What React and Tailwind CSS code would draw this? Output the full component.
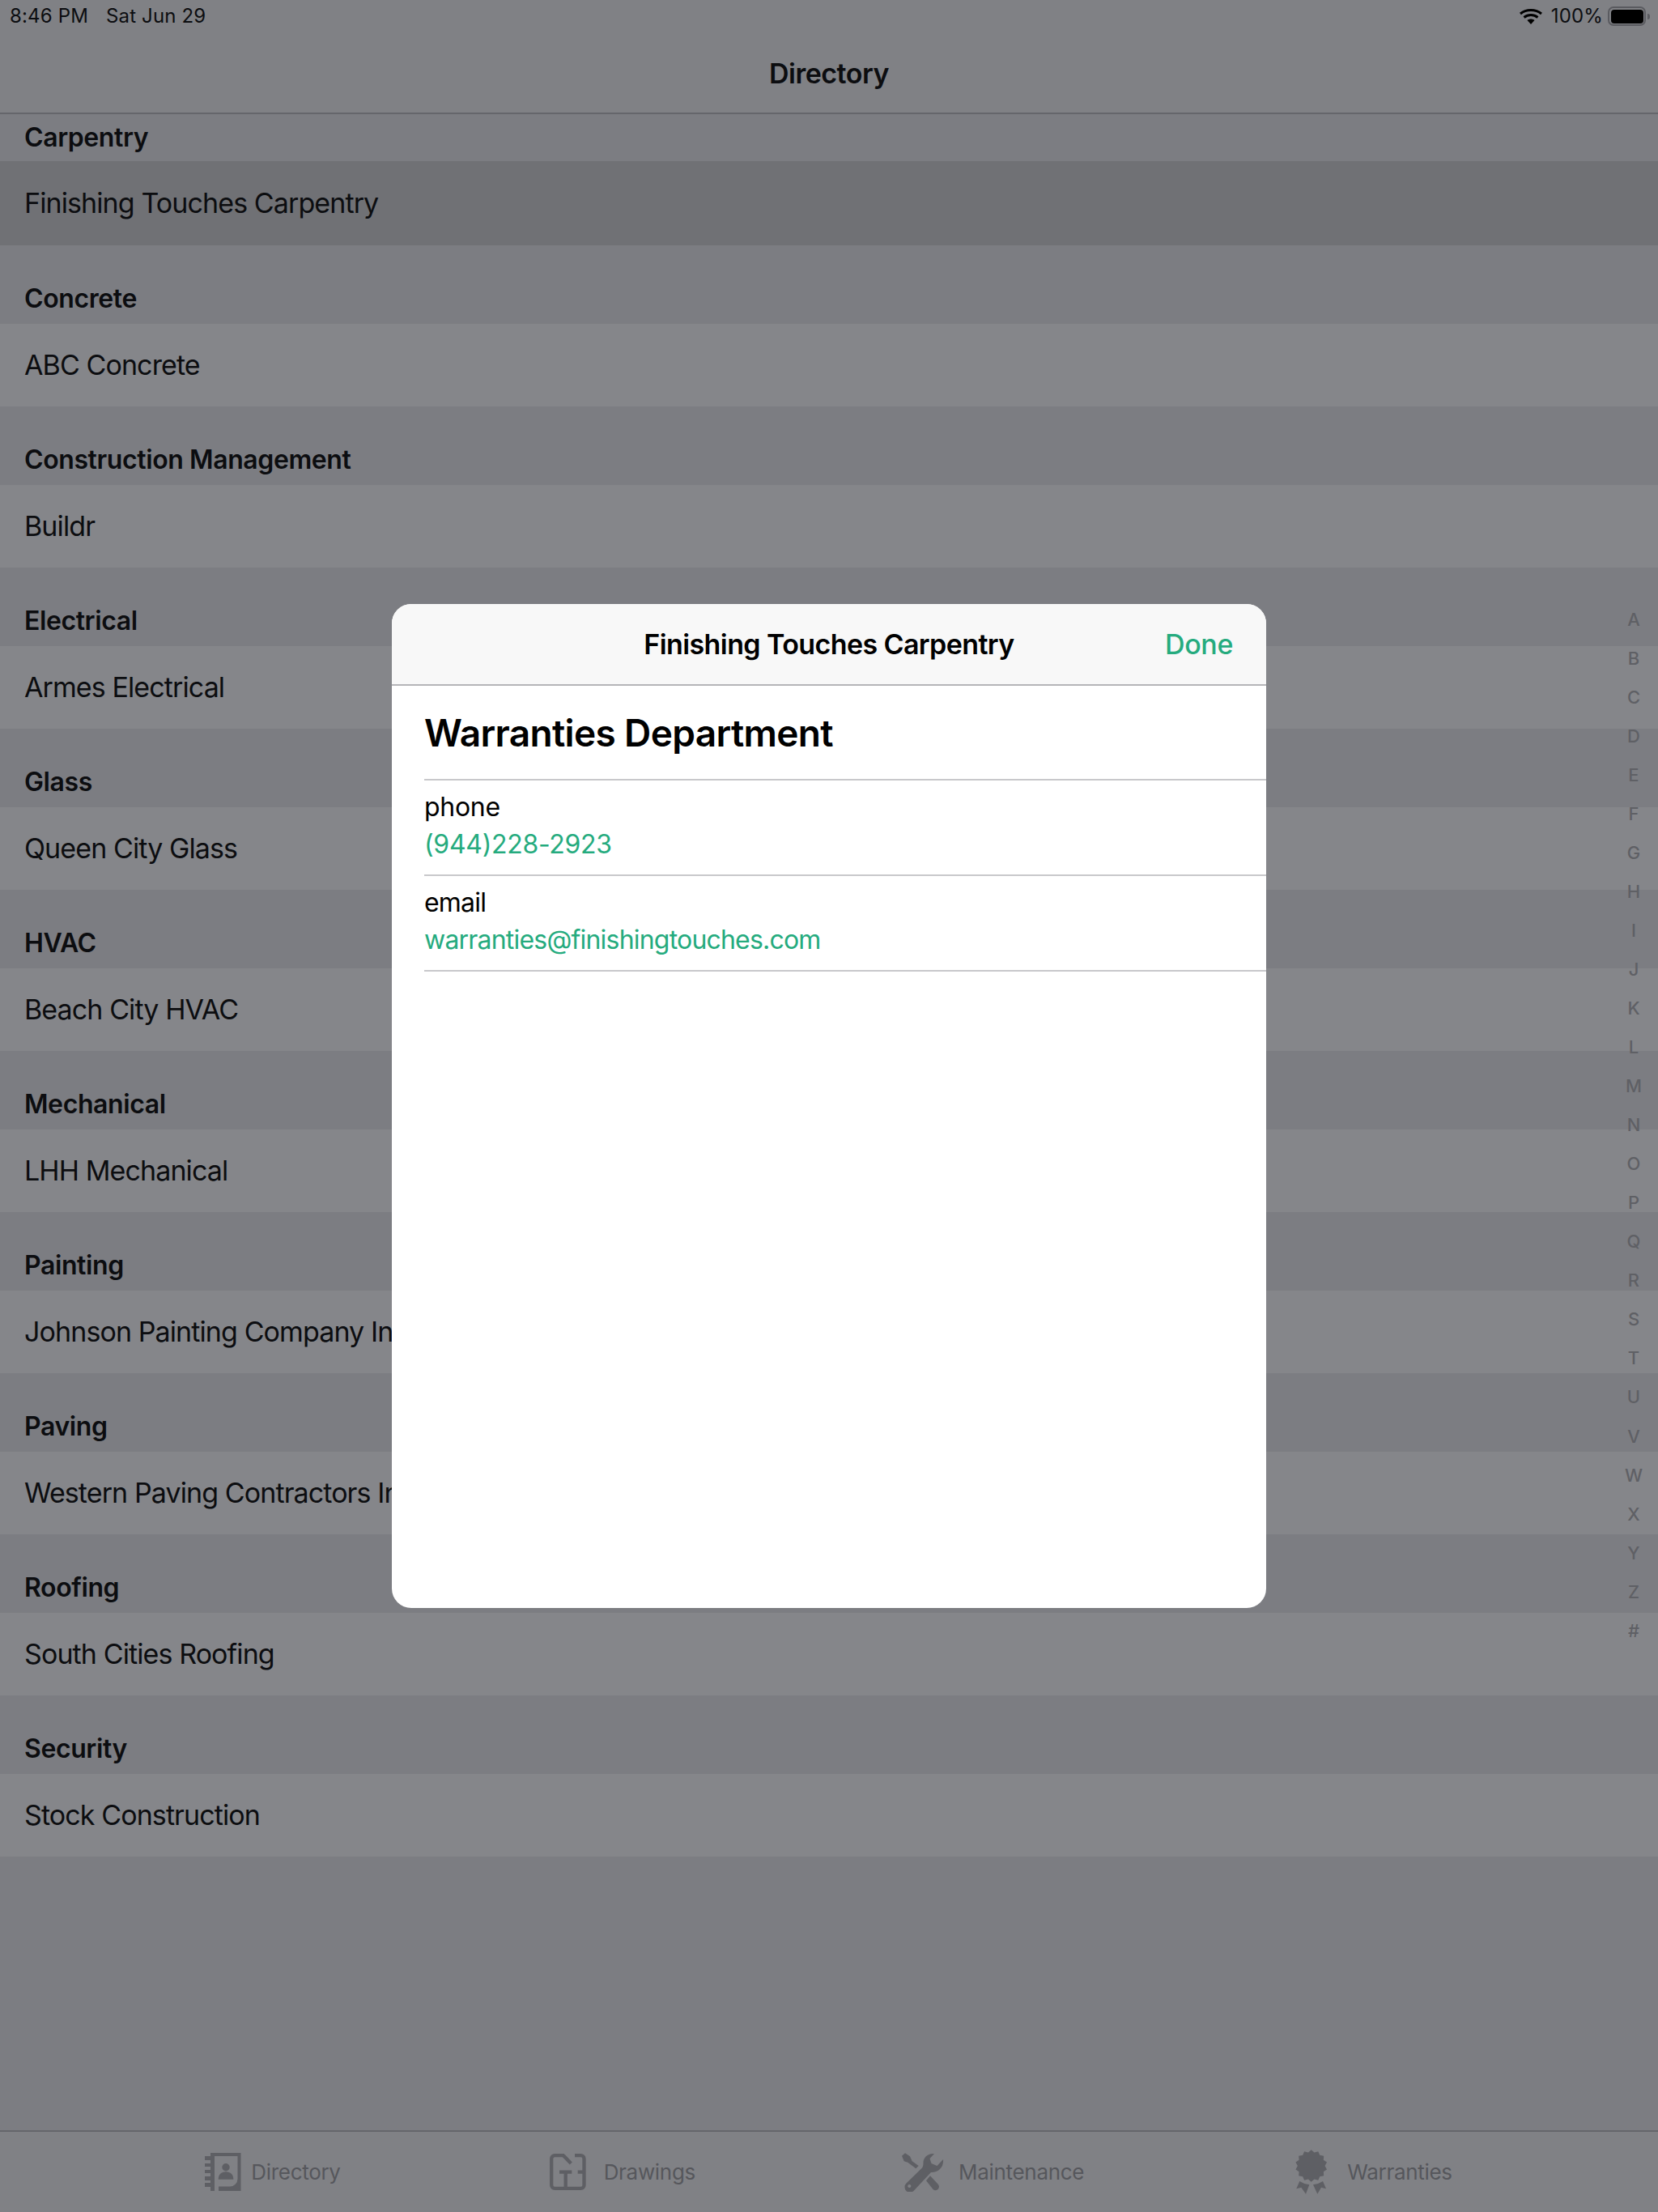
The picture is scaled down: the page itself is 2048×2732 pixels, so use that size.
const sections = [
  ["Carpentry", "Finishing Touches Carpentry"],
  ["Concrete", "ABC Concrete"],
  ["Construction Management", "Buildr"],
  ["Electrical", "Armes Electrical"],
  ["Glass", "Queen City Glass"],
  ["HVAC", "Beach City HVAC"],
  ["Mechanical", "LHH Mechanical"],
  ["Painting", "Johnson Painting Company Inc"],
  ["Paving", "Western Paving Contractors Inc"],
  ["Roofing", "South Cities Roofing"],
  ["Security", "Stock Construction"],
];

const letters = "ABCDEFGHIJKLMNOPQRSTUVWXYZ#".split("");

// scalloped edge of the warranty badge
const badgePoints = Array.from({ length: 28 }, (_, i) => {
  const r = i % 2 === 0 ? 19.8 : 16.8;
  const a = (i * Math.PI) / 14 - Math.PI / 2;
  return `${(20.7 + r * Math.cos(a)).toFixed(2)},${(20 + r * Math.sin(a)).toFixed(2)}`;
}).join(" ");

const DirectoryIcon = () => (
  <svg width="45" height="47" viewBox="0 0 45 47" fill="#5e5f64" className="translate-x-[9px]">
    <path
      fillRule="evenodd"
      d="M7 0H44.500V47H7ZM12 4H40.500V32a9.500 9.500 0 0 1-9.500 9.500H17V47H12Z"
    />
    <path d="M0 4h7v5H0zM0 13h7v4H0zM0 21h7v4H0zM0 29h7v5H0zM0 37h7v5H0z" />
    <circle cx="26" cy="17.700" r="4.700" />
    <path d="M16.700 32.700c0-6 3.500-9.500 9.300-9.500s9.300 3.500 9.300 9.500z" />
  </svg>
);

const DrawingsIcon = () => (
  <svg width="45" height="45" viewBox="0 0 45 45" fill="none" stroke="#5e5f64" strokeWidth="4.300">
    <path d="M18 2.200H6.200a4 4 0 0 0-4 4V38.800a4 4 0 0 0 4 4H38.500a4 4 0 0 0 4-4V6.200a4 4 0 0 0-4-4H31" />
    <path d="M17 2.200l9.300 9.800" />
    <path d="M12 22.700H27.300M19.700 22.700V43M42.700 22.700H34.700" />
  </svg>
);

const MaintenanceIcon = () => (
  <svg width="52" height="48" viewBox="0 0 52 48" fill="#5e5f64">
    <path d="M0 3.700L4 .3l6 4 2.700 6 8 5.700-3.400 3.300-10-7.600-4.600-1.400z" />
    <path d="M35 28.300L44.500 38.500a4.300 4.300 0 0 1-6 6.500L30 34.300z" />
    <path
      fillRule="evenodd"
      d="M40 1C32 0 26 6 26.500 13C26.500 15 26 17 25 18.500L5.500 37.500a6.500 6.500 0 0 0 9 9.500L36 24C44 24.500 52 19 51 8L43.500 16L36.500 13L34.500 7ZM9.300 39a2 2 0 1 0 .01 0Z"
    />
  </svg>
);

const WarrantiesIcon = () => (
  <svg width="42" height="55" viewBox="0 0 42 55" fill="#5e5f64">
    <polygon points={badgePoints} />
    <path d="M6.300 39l6 3 6 1.300L14 54.700l-5.700-8-6 1.600z" />
    <path d="M35 39l-6 3-6 1.300 5.300 11.400 4.700-8 6 1.600z" />
  </svg>
);

const WifiIcon = () => (
  <svg width="28" height="20" viewBox="0 0 28 20" fill="none" stroke="#000" strokeWidth="3">
    <path d="M1 7c7-6 19-6 26 0" />
    <path d="M5.500 11.500c5-4 12-4 17 0" />
    <path d="M14 20l-4.500-5c2.500-2 6.500-2 9 0z" fill="#000" stroke="none" />
  </svg>
);

function TabItem({ icon, label }) {
  return (
    <div className="flex items-center gap-[14px]">
      <div className="flex w-[60px] justify-center">{icon}</div>
      <span className="text-[26px] tracking-[-0.3px] text-[#56575c]">{label}</span>
    </div>
  );
}

export default function App() {
  return (
    <div className="relative flex h-screen w-screen flex-col overflow-hidden bg-[#7c7d82] font-['Inter',sans-serif] text-[#0c0d10]">
      <header className="flex h-[141px] shrink-0 flex-col border-b-2 border-[#65666b] bg-[#808185]">
        <div className="flex h-[40px] items-center justify-between pl-[12px] pr-[10px] text-[24px] tracking-[0.15px]">
          <div className="flex gap-[22px]">
            <span>8:46 PM</span>
            <span>Sat Jun 29</span>
          </div>
          <div className="flex items-center">
            <WifiIcon />
            <span className="ml-[11px] mr-[6px]">100%</span>
            <div className="flex items-center gap-[2px]">
              <div className="h-[24px] w-[47px] rounded-[7px] border-2 border-[#5a5b60] p-[1.5px]">
                <div className="h-full w-full rounded-[4px] bg-black" />
              </div>
              <div className="h-[7px] w-[3px] rounded-r-full bg-[#5a5b60]" />
            </div>
          </div>
        </div>
        <div className="flex flex-1 items-center justify-center pt-[2px] text-[34px] font-semibold tracking-[-0.5px]">
          Directory
        </div>
      </header>

      <main className="flex-1">
        {sections.map(([title, name], i) => (
          <section key={title}>
            <div
              className={`flex items-end px-[30px] text-[32px] font-semibold tracking-[-0.4px] ${
                i === 0 ? "h-[58px] pb-[5px]" : "h-[97px] pb-[7px]"
              }`}
            >
              {title}
            </div>
            <div
              className={`flex items-center px-[30px] pb-[2px] text-[34px] tracking-[-0.9px] ${
                i === 0 ? "h-[104px] bg-[#707175]" : "h-[102px] bg-[#85868a]"
              }`}
            >
              {name}
            </div>
          </section>
        ))}
      </main>

      <footer className="flex h-[101px] shrink-0 items-center justify-center gap-[251px] border-t-2 border-[#65666b] bg-[#808185] pr-[18px]">
        <TabItem icon={<DirectoryIcon />} label="Directory" />
        <TabItem icon={<DrawingsIcon />} label="Drawings" />
        <TabItem icon={<MaintenanceIcon />} label="Maintenance" />
        <TabItem icon={<WarrantiesIcon />} label="Warranties" />
      </footer>

      <div className="absolute right-[18px] top-[741px] flex w-[24px] flex-col items-center text-[22px] font-medium text-[#5f6065]">
        {letters.map((l) => (
          <span key={l} className="flex h-[48.05px] items-center">
            {l}
          </span>
        ))}
      </div>

      <div className="absolute left-[484px] top-[746px] flex h-[1240px] w-[1080px] flex-col overflow-hidden rounded-[24px] bg-white text-black">
        <div className="relative flex h-[101px] shrink-0 items-center justify-center border-b-2 border-[#b5b5b8] bg-[#f8f8f8]">
          <span className="text-[34px] font-semibold tracking-[-0.6px]">Finishing Touches Carpentry</span>
          <span className="absolute right-[41px] text-[34px] font-medium tracking-[-0.4px] text-[#25ab7e]">Done</span>
        </div>
        <div className="pl-[40px]">
          <div className="flex h-[117px] items-center border-b-2 border-[#c8c8cb] pt-[2px] text-[46px] font-semibold tracking-[-0.65px]">
            Warranties Department
          </div>
          <div className="flex h-[118px] flex-col justify-center gap-[8px] border-b-2 border-[#c8c8cb] pb-[4px] text-[32px] leading-[38px] tracking-[-0.3px]">
            <span>phone</span>
            <span className="text-[#25ab7e]">(944)228-2923</span>
          </div>
          <div className="flex h-[118px] flex-col justify-center gap-[8px] border-b-2 border-[#c8c8cb] pb-[4px] text-[32px] leading-[38px] tracking-[-0.8px]">
            <span>email</span>
            <span className="text-[#25ab7e]">warranties@finishingtouches.com</span>
          </div>
        </div>
      </div>
    </div>
  );
}
